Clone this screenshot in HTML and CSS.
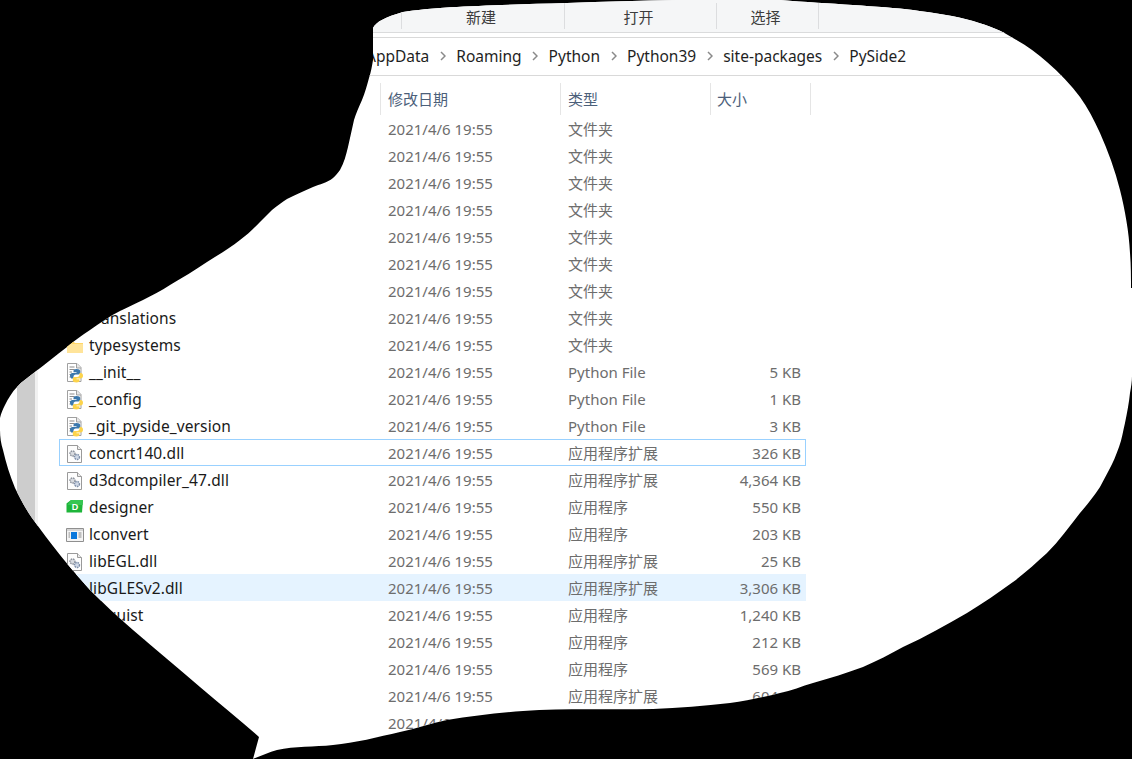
FILE: index.html
```html
<!DOCTYPE html>
<html lang="zh-CN">
<head>
<meta charset="utf-8">
<title>PySide2</title>
<link rel="stylesheet" href="styles.css">
</head>
<body>
<svg class="defs" width="0" height="0" aria-hidden="true">
  <defs>
    <symbol id="i-folder" viewBox="0 0 18 20">
      <path d="M1 5h6l2 2h8v10H1z" fill="#ffd768"/>
      <path d="M1 8h16v9H1z" fill="#ffe49a"/>
    </symbol>
    <symbol id="i-py" viewBox="0 0 18 20">
      <path d="M1.500 .5h9.500l4 4v14h-13.500z" fill="#fff" stroke="#a0a0a0"/>
      <path d="M10.500 .5v4.500h4.500" fill="#e8e8e8" stroke="#a0a0a0"/>
      <path d="M3.500 4h5M3.500 6.500h5M3.500 9h2.500M3.500 11.500h1.500M3.500 14h1" stroke="#8b8b8b"/>
      <path d="M10.500 6c-2.200 0-3 .7-3 2v1.300h3v.7h-4.200c-1.300 0-2.300 .8-2.300 2.700s.9 2.800 2.100 2.800h1.400v-1.800c0-1.200 .9-2.200 2.200-2.200h2.800c1 0 1.700-.8 1.700-1.700v-1.800c0-1.300-1.300-2-3.700-2z" fill="#3b78ad"/>
      <path d="M10.500 19.500c2.200 0 3-.7 3-2v-1.300h-3v-.7h4.200c1.300 0 2.300-.8 2.300-2.700s-.9-2.800-2.100-2.800h-1.400v1.800c0 1.200-.9 2.200-2.200 2.200h-2.800c-1 0-1.700 .8-1.700 1.700v1.800c0 1.300 1.300 2 3.700 2z" fill="#fcd34b"/>
    </symbol>
    <symbol id="i-dll" viewBox="0 0 18 20">
      <path d="M1.500 1.500h10l4 4v13h-14z" fill="#fdfdfd" stroke="#9a9a9a"/>
      <path d="M11.500 1.500v4h4" fill="#ececec" stroke="#9a9a9a"/>
      <circle cx="6.500" cy="9.500" r="2.500" fill="#d8dbe0" stroke="#8c929c" stroke-width="1.400" stroke-dasharray="1.600 .8"/>
      <circle cx="11" cy="13" r="2.500" fill="#cfd8e6" stroke="#7d8ea8" stroke-width="1.400" stroke-dasharray="1.600 .8"/>
    </symbol>
    <symbol id="i-designer" viewBox="0 0 18 20">
      <path d="M5 2h12l-1 12.500h-15.500v-9z" fill="#1eb53a"/>
      <path d="M5 2h12l-.4 5h-15.100z" fill="#35c652"/>
      <text x="9" y="12" text-anchor="middle" class="icon-letter">D</text>
    </symbol>
    <symbol id="i-app" viewBox="0 0 18 20">
      <path d="M.5 3.500h17v13h-17z" fill="#f4f4f4" stroke="#8f8f8f"/>
      <path d="M1 4h16v2h-16z" fill="#d6d6d6"/>
      <path d="M5 7h6v7h-6z" fill="#0a78dc"/>
      <path d="M2.500 8h1.500M2.500 10h1.500M2.500 12h1.500M12.500 8h3M12.500 10h3M12.500 12h3" stroke="#8a8a8a"/>
    </symbol>
    <symbol id="i-chev" viewBox="0 0 6 10">
      <path d="M1 1l4 4-4 4" fill="none" stroke="#8a8a8a" stroke-width="1.500"/>
    </symbol>
  </defs>
</svg>
<main class="window">
  <header class="ribbon">
    <div class="tab tab-new">新建</div>
    <div class="tab tab-open">打开</div>
    <div class="tab tab-select">选择</div>
  </header>
  <nav class="crumbs">
    <span>AppData</span><svg class="chev"><use href="#i-chev"/></svg>
    <span>Roaming</span><svg class="chev"><use href="#i-chev"/></svg>
    <span>Python</span><svg class="chev"><use href="#i-chev"/></svg>
    <span>Python39</span><svg class="chev"><use href="#i-chev"/></svg>
    <span>site-packages</span><svg class="chev"><use href="#i-chev"/></svg>
    <span>PySide2</span>
  </nav>
  <section class="content">
    <aside class="nav-pane"><div class="nav-track"></div></aside>
    <div class="files">
      <div class="heads">
        <div class="head head-date">修改日期</div>
        <div class="head head-type">类型</div>
        <div class="head head-size">大小</div>
      </div>
      <div class="rows">
        <div class="row"><svg class="ico"><use href="#i-folder"/></svg><span class="name">glue</span><span class="meta">2021/4/6 19:55</span><span class="meta">文件夹</span><span class="meta size"></span></div>
        <div class="row"><svg class="ico"><use href="#i-folder"/></svg><span class="name">include</span><span class="meta">2021/4/6 19:55</span><span class="meta">文件夹</span><span class="meta size"></span></div>
        <div class="row"><svg class="ico"><use href="#i-folder"/></svg><span class="name">plugins</span><span class="meta">2021/4/6 19:55</span><span class="meta">文件夹</span><span class="meta size"></span></div>
        <div class="row"><svg class="ico"><use href="#i-folder"/></svg><span class="name">qml</span><span class="meta">2021/4/6 19:55</span><span class="meta">文件夹</span><span class="meta size"></span></div>
        <div class="row"><svg class="ico"><use href="#i-folder"/></svg><span class="name">resources</span><span class="meta">2021/4/6 19:55</span><span class="meta">文件夹</span><span class="meta size"></span></div>
        <div class="row"><svg class="ico"><use href="#i-folder"/></svg><span class="name">scripts</span><span class="meta">2021/4/6 19:55</span><span class="meta">文件夹</span><span class="meta size"></span></div>
        <div class="row"><svg class="ico"><use href="#i-folder"/></svg><span class="name">support</span><span class="meta">2021/4/6 19:55</span><span class="meta">文件夹</span><span class="meta size"></span></div>
        <div class="row"><svg class="ico"><use href="#i-folder"/></svg><span class="name">translations</span><span class="meta">2021/4/6 19:55</span><span class="meta">文件夹</span><span class="meta size"></span></div>
        <div class="row"><svg class="ico"><use href="#i-folder"/></svg><span class="name">typesystems</span><span class="meta">2021/4/6 19:55</span><span class="meta">文件夹</span><span class="meta size"></span></div>
        <div class="row"><svg class="ico"><use href="#i-py"/></svg><span class="name">__init__</span><span class="meta">2021/4/6 19:55</span><span class="meta">Python File</span><span class="meta size">5 KB</span></div>
        <div class="row"><svg class="ico"><use href="#i-py"/></svg><span class="name">_config</span><span class="meta">2021/4/6 19:55</span><span class="meta">Python File</span><span class="meta size">1 KB</span></div>
        <div class="row"><svg class="ico"><use href="#i-py"/></svg><span class="name">_git_pyside_version</span><span class="meta">2021/4/6 19:55</span><span class="meta">Python File</span><span class="meta size">3 KB</span></div>
        <div class="row row-focus"><svg class="ico"><use href="#i-dll"/></svg><span class="name">concrt140.dll</span><span class="meta">2021/4/6 19:55</span><span class="meta">应用程序扩展</span><span class="meta size">326 KB</span></div>
        <div class="row"><svg class="ico"><use href="#i-dll"/></svg><span class="name">d3dcompiler_47.dll</span><span class="meta">2021/4/6 19:55</span><span class="meta">应用程序扩展</span><span class="meta size">4,364 KB</span></div>
        <div class="row"><svg class="ico"><use href="#i-designer"/></svg><span class="name">designer</span><span class="meta">2021/4/6 19:55</span><span class="meta">应用程序</span><span class="meta size">550 KB</span></div>
        <div class="row"><svg class="ico"><use href="#i-app"/></svg><span class="name">lconvert</span><span class="meta">2021/4/6 19:55</span><span class="meta">应用程序</span><span class="meta size">203 KB</span></div>
        <div class="row"><svg class="ico"><use href="#i-dll"/></svg><span class="name">libEGL.dll</span><span class="meta">2021/4/6 19:55</span><span class="meta">应用程序扩展</span><span class="meta size">25 KB</span></div>
        <div class="row row-hover"><svg class="ico"><use href="#i-dll"/></svg><span class="name">libGLESv2.dll</span><span class="meta">2021/4/6 19:55</span><span class="meta">应用程序扩展</span><span class="meta size">3,306 KB</span></div>
        <div class="row"><svg class="ico"><use href="#i-app"/></svg><span class="name">linguist</span><span class="meta">2021/4/6 19:55</span><span class="meta">应用程序</span><span class="meta size">1,240 KB</span></div>
        <div class="row"><svg class="ico"><use href="#i-app"/></svg><span class="name">lrelease</span><span class="meta">2021/4/6 19:55</span><span class="meta">应用程序</span><span class="meta size">212 KB</span></div>
        <div class="row"><svg class="ico"><use href="#i-app"/></svg><span class="name">lupdate</span><span class="meta">2021/4/6 19:55</span><span class="meta">应用程序</span><span class="meta size">569 KB</span></div>
        <div class="row"><svg class="ico"><use href="#i-dll"/></svg><span class="name">msvcp140.dll</span><span class="meta">2021/4/6 19:55</span><span class="meta">应用程序扩展</span><span class="meta size">604 KB</span></div>
        <div class="row"><svg class="ico"><use href="#i-dll"/></svg><span class="name">pyside2.dll</span><span class="meta">2021/4/6 19:55</span><span class="meta">应用程序扩展</span><span class="meta size">712 KB</span></div>
      </div>
    </div>
  </section>
</main>
</body>
</html>
```

FILE: styles.css
```css
* { box-sizing: border-box; }

html, body {
  margin: 0;
  height: 100%;
  background: #000;
  overflow: hidden;
}

.defs { display: block; height: 0; }

.window {
  width: 1132px;
  height: 759px;
  overflow: hidden;
  background: #fff;
  display: flex;
  flex-direction: column;
  font-family: "Noto Sans", "Noto Sans CJK SC", sans-serif;
  font-size: 15px;
  clip-path: path("M373 28 C376 22 385 17 403 12 C440 6 500 5 567 3 C640 0 720 -1 780 0 C830 4 880 6 913 10 C935 13 955 16 973 21 C990 26 1002 31 1013 38 C1026 45 1037 53 1047 62 C1060 73 1071 85 1080 97 C1088 108 1094 120 1100 133 C1108 151 1115 170 1120 190 C1125 210 1129 232 1130 253 C1131 265 1131 277 1131 288 L1132 288 L1132 376 C1132 382 1131 387 1130 393 C1129 403 1127 413 1125 423 C1123 431 1122 439 1119 447 C1116 455 1113 463 1109 470 C1106 476 1103 481 1100 487 C1094 496 1087 505 1080 513 C1069 527 1059 541 1047 553 C1036 563 1025 573 1013 582 C998 593 983 603 967 613 C946 625 925 637 903 647 C890 654 877 661 863 667 C847 673 830 678 813 683 C802 686 791 691 780 693 C764 697 747 701 730 703 C704 706 679 708 653 709 C610 710 566 708 523 711 C497 713 472 716 447 720 C431 723 416 729 400 732 C378 737 355 743 333 745 C314 747 295 746 277 750 C269 752 261 756 253 759 L259 737 C240 720 220 704 200 687 C178 668 155 649 133 630 C118 617 104 604 90 590 C70 568 50 543 32 518 C25 508 20 498 15 488 C10 476 6 463 3 450 C1 444 0 437 0 430 L0 418 C1 413 3 409 5 405 C8 399 12 392 17 387 C22 381 29 377 35 372 C46 364 56 355 67 347 C74 341 82 335 90 330 C100 323 110 316 120 311 C128 307 135 304 143 300 C152 295 161 291 170 285 C182 278 195 270 207 262 C218 255 230 248 240 240 C247 235 254 228 260 222 C264 218 268 214 272 210 C277 206 282 202 287 199 C295 195 304 191 313 187 C320 184 327 183 333 178 C336 175 338 173 340 170 C344 163 346 155 348 147 C350 138 352 129 354 120 C356 113 359 107 362 100 C365 93 367 85 369 78 C371 72 372 66 373 60 Z");
}

/* Ribbon */
.ribbon {
  flex: none;
  height: 33px;
  padding: 3px 0 3px 401px;
  display: flex;
  background: #f5f6f7;
  border-bottom: 1px solid #dadbdc;
}
.tab {
  display: flex;
  align-items: center;
  justify-content: center;
  padding-right: 4px;
  color: #3c3c3c;
  border-right: 1px solid #dcdddf;
}
.tab-new { width: 164px; border-left: 1px solid #dcdddf; }
.tab-open { width: 152px; }
.tab-select { width: 102px; }

/* Breadcrumb */
.crumbs {
  flex: none;
  height: 39px;
  margin-top: 4px;
  padding: 0 0 2px 366px;
  display: flex;
  align-items: center;
  gap: 10.500px;
  font-size: 15.500px;
  color: #1f1f1f;
  border-top: 1px solid #d9d9d9;
  border-bottom: 1px solid #d9d9d9;
}
.chev { flex: none; width: 6px; height: 10px; }

/* Content */
.content {
  flex: 1;
  min-height: 0;
  display: flex;
}
.nav-pane {
  flex: none;
  width: 38px;
  padding-left: 17px;
  border-right: 3px solid #f1f1f1;
}
.nav-track { width: 18px; height: 100%; background: #cdcdcd; }
.files { flex: 1; min-width: 0; }

.heads {
  height: 39px;
  padding: 7px 0 0 342px;
  display: flex;
  color: #4c607a;
}
.head {
  padding: 0 0 1px 7px;
  display: flex;
  align-items: center;
  border-left: 1px solid #e5e5e5;
}
.head-date { width: 180px; }
.head-type { width: 150px; }
.head-size { width: 101px; padding-left: 6px; border-right: 1px solid #e5e5e5; }

.rows { margin-left: 21px; width: 747px; }
.row {
  height: 27px;
  padding: 1px 4px 0 0;
  display: grid;
  grid-template-columns: 29px 299px 180px 142px 1fr;
  align-items: center;
  line-height: 20px;
  border: 1px solid transparent;
  white-space: nowrap;
}
.row-focus { border-color: #99d1ff; }
.row-hover { background: #e5f3ff; }

.ico { width: 18px; height: 20px; margin: 2px 0 0 6px; }
.icon-letter {
  font-family: "Liberation Sans", sans-serif;
  font-size: 9px;
  font-weight: 700;
  fill: #fff;
}
.name { color: #1a1a1a; font-size: 15.500px; letter-spacing: .1px; }
.meta { color: #6d6d6d; }
.size { text-align: right; }
```
